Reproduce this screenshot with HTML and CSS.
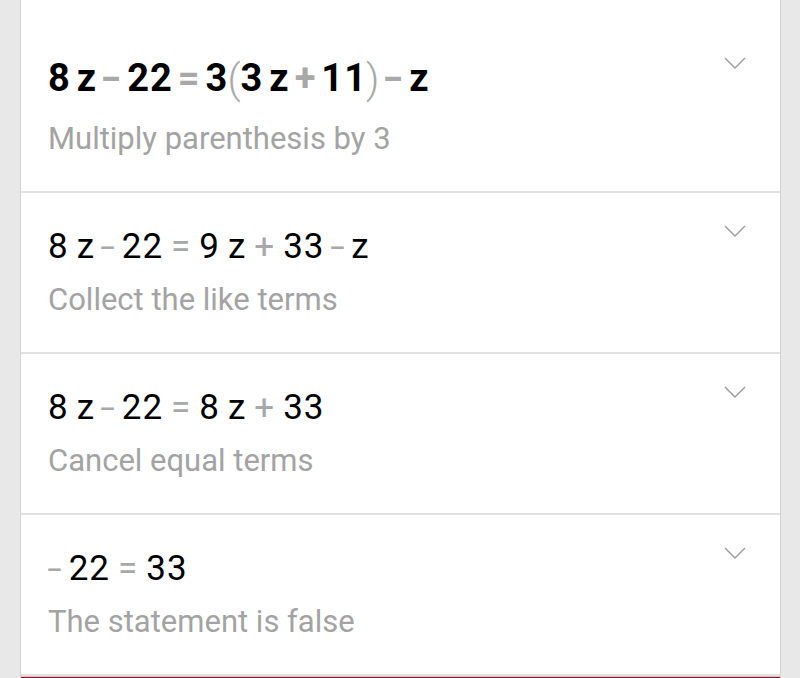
FILE: index.html
```html
<!DOCTYPE html>
<html lang="en">
<head>
    <meta charset="UTF-8">
    <title>Solution steps</title>
    <link rel="stylesheet" href="styles.css">
</head>
<body>

    <div class="steps">

        <div class="step first">
            <div class="step-body">
                <div class="expr bold">
                    8<span class="var">z</span><span class="op minus">-</span>22<span class="op">=</span>3<span class="paren">(</span>3<span class="var">z</span><span class="op">+</span>11<span class="paren">)</span><span class="op minus">-</span><span class="var solo">z</span>
                </div>
                <div class="note">Multiply parenthesis by 3</div>
            </div>
            <svg class="chevron" viewBox="0 0 22 12"><path d="M1 1 L11 11 L21 1"/></svg>
        </div>

        <div class="step">
            <div class="step-body">
                <div class="expr">
                    8<span class="var">z</span><span class="op minus">-</span>22<span class="op">=</span>9<span class="var">z</span><span class="op">+</span>33<span class="op minus">-</span><span class="var solo">z</span>
                </div>
                <div class="note">Collect the like terms</div>
            </div>
            <svg class="chevron" viewBox="0 0 22 12"><path d="M1 1 L11 11 L21 1"/></svg>
        </div>

        <div class="step">
            <div class="step-body">
                <div class="expr">
                    8<span class="var">z</span><span class="op minus">-</span>22<span class="op">=</span>8<span class="var">z</span><span class="op">+</span>33
                </div>
                <div class="note">Cancel equal terms</div>
            </div>
            <svg class="chevron" viewBox="0 0 22 12"><path d="M1 1 L11 11 L21 1"/></svg>
        </div>

        <div class="step">
            <div class="step-body">
                <div class="expr">
                    <span class="op minus lead">-</span>22<span class="op">=</span>33
                </div>
                <div class="note">The statement is false</div>
            </div>
            <svg class="chevron" viewBox="0 0 22 12"><path d="M1 1 L11 11 L21 1"/></svg>
        </div>

        <div class="bottom-bar"></div>
    </div>

</body>
</html>
```

FILE: styles.css
```css
body {
    margin: 0;
    background-color: #e8e8e8;
    font-family: Roboto, "Liberation Sans", sans-serif;
    height: 678px;
    overflow: hidden;
}

.steps {
    margin: 0 19px 0 20px;
    background-color: #e2e2e2;
    border-left: 1px solid #d2d2d2;
    border-right: 1px solid #d2d2d2;
}

.step {
    display: flex;
    justify-content: space-between;
    align-items: flex-start;
    background-color: #fff;
    height: 159px;
    padding: 0 34px 0 27px;
    box-sizing: border-box;
    margin-bottom: 2px;
}

.step.first {
    height: 191px;
}

.step-body {
    padding-top: 34px;
}

.first .step-body {
    padding-top: 56px;
}

.expr {
    font-size: 35px;
    letter-spacing: 1px;
    color: #000;
    line-height: 40px;
    white-space: nowrap;
}

.expr.bold {
    font-size: 38px;
    font-weight: 700;
    letter-spacing: 1px;
    line-height: 44px;
}

.var {
    margin-left: 8px;
}

.bold .var {
    margin-left: 6px;
}

.var.solo,
.bold .var.solo {
    margin-left: 0;
}

.op {
    display: inline-block;
    color: #a8a8a8;
    margin: 0 8px;
}

.op.minus {
    transform: scaleX(1.5);
    margin: 0 8px;
}

.bold .op {
    margin: 0 5px;
}

.bold .op.minus {
    margin: 0 7px;
}

.op.lead,
.bold .op.lead {
    margin-left: 2px;
}

.paren {
    display: inline-block;
    color: #a8a8a8;
    font-weight: 300;
    font-size: 41px;
    line-height: 40px;
    vertical-align: -2px;
    margin: 0 -1px;
}

.note {
    margin-top: 17px;
    font-size: 31px;
    color: #a3a3a3;
    line-height: 32px;
}

.first .note {
    margin-top: 23px;
}

.chevron {
    width: 22px;
    height: 12px;
    margin-top: 32px;
    fill: none;
    stroke: #9a9a9a;
    stroke-width: 1.4;
}

.first .chevron {
    margin-top: 57px;
}

.bottom-bar {
    height: 3px;
    background-color: #8a1a2e;
    border-top: 1px solid #e8b8c0;
}
```
